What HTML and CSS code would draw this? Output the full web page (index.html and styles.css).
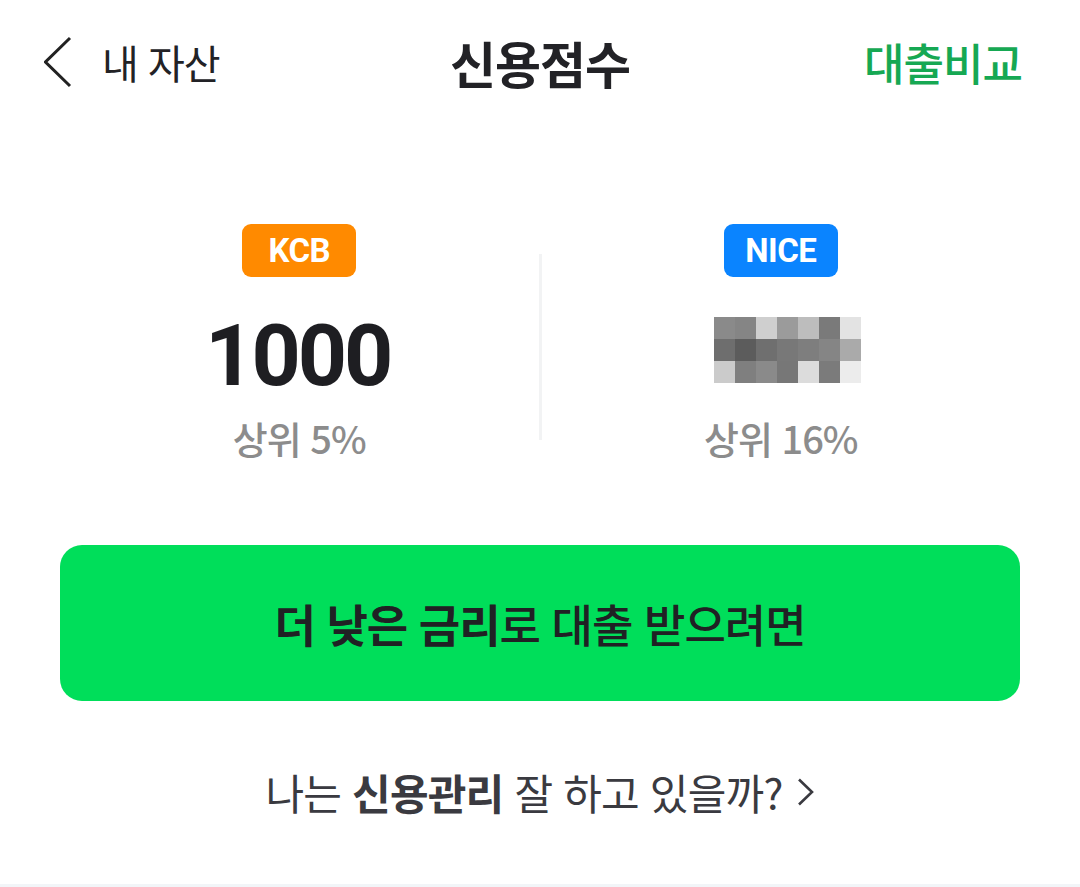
FILE: index.html
```html
<!DOCTYPE html>
<html lang="ko">
  <head>
    <title>신용점수</title>
    <meta charset="UTF-8">
    <meta name="viewport" content="width=device-width, initial-scale=1">
    <link rel="stylesheet" href="styles.css">
  </head>
  <body>
    <header class="topbar">
      <a class="back" href="#">
        <svg width="30" height="52" viewBox="0 0 30 52" aria-hidden="true">
          <polyline points="26,2 1.5,26 26,50" fill="none" stroke="#222" stroke-width="3"/>
        </svg>
        <span>내 자산</span>
      </a>
      <h1 class="title">신용점수</h1>
      <a class="compare" href="#">대출비교</a>
    </header>

    <main>
      <section class="scores">
        <div class="score">
          <span class="badge badge-kcb">KCB</span>
          <div class="value">1000</div>
          <div class="rank">상위 5%</div>
        </div>
        <div class="divider"></div>
        <div class="score">
          <span class="badge badge-nice">NICE</span>
          <div class="mosaic" aria-label="가려진 점수">
            <i style="background:#8a8a8a"></i><i style="background:#858585"></i><i style="background:#cfcfcf"></i><i style="background:#9b9b9b"></i><i style="background:#bdbdbd"></i><i style="background:#7a7a7a"></i><i style="background:#e3e3e3"></i>
            <i style="background:#6e6e6e"></i><i style="background:#5c5c5c"></i><i style="background:#6f6f6f"></i><i style="background:#787878"></i><i style="background:#7e7e7e"></i><i style="background:#858585"></i><i style="background:#aaaaaa"></i>
            <i style="background:#cbcbcb"></i><i style="background:#7f7f7f"></i><i style="background:#8a8a8a"></i><i style="background:#777777"></i><i style="background:#dcdcdc"></i><i style="background:#7b7b7b"></i><i style="background:#ececec"></i>
          </div>
          <div class="rank">상위 16%</div>
        </div>
      </section>

      <button class="cta"><b>더 낮은 금리</b>로 대출 받으려면</button>

      <a class="check" href="#">
        <span>나는 <b>신용관리</b> 잘 하고 있을까?</span>
        <svg width="18" height="28" viewBox="0 0 18 28" aria-hidden="true">
          <polyline points="2,1.5 15,14 2,26.5" fill="none" stroke="#3a3a40" stroke-width="2.6"/>
        </svg>
      </a>
    </main>
    <div class="bottom"></div>
  </body>
</html>
```

FILE: styles.css
```css
:root {
  --font-kr: "Noto Sans CJK KR", "Noto Sans", sans-serif;
  --font-num: Roboto, "Noto Sans CJK KR", sans-serif;
  --color-txt: #222226;
  --color-sub: #8c8c8c;
  --color-green: #00de5a;
  --color-link: #16a853;
}

* {
  box-sizing: border-box;
}

body {
  margin: 0;
  width: 1080px;
  height: 887px;
  overflow: hidden;
  font-family: var(--font-kr);
  color: var(--color-txt);
  background: #fff;
  display: flex;
  flex-direction: column;
}

a {
  color: inherit;
  text-decoration: none;
}

.topbar {
  height: 124px;
  padding: 0 58px 0 44px;
  display: flex;
  align-items: center;
  justify-content: space-between;
  position: relative;
}

.back {
  display: flex;
  align-items: center;
  gap: 28px;
  font-size: 40px;
  letter-spacing: -1px;
}

.title {
  position: absolute;
  left: 0;
  right: 0;
  margin: 0;
  text-align: center;
  font-size: 50px;
  font-weight: 700;
  letter-spacing: -1px;
  pointer-events: none;
}

.compare {
  color: var(--color-link);
  font-size: 44px;
  font-weight: 500;
  letter-spacing: -1px;
}

main {
  flex: 1;
  padding: 0 60px;
  display: flex;
  flex-direction: column;
}

.scores {
  margin-top: 100px;
  display: flex;
  align-items: flex-start;
}

.score {
  flex: 1;
  display: flex;
  flex-direction: column;
  align-items: center;
}

.divider {
  width: 3px;
  height: 186px;
  background: #f2f3f4;
  margin-top: 30px;
}

.badge {
  width: 114px;
  height: 53px;
  border-radius: 9px;
  color: #fff;
  font-family: var(--font-num);
  font-weight: 700;
  font-size: 33px;
  display: flex;
  align-items: center;
  justify-content: center;
  letter-spacing: -0.5px;
}

.badge-kcb {
  background: #ff8a00;
}

.badge-nice {
  background: #0a84ff;
}

.value {
  font-family: var(--font-num);
  font-weight: 700;
  font-size: 86px;
  letter-spacing: -3px;
  line-height: 1;
  margin-top: 36px;
  height: 77px;
  padding-right: 3px;
  color: #1e1e22;
}

.mosaic {
  display: grid;
  grid-template-columns: repeat(7, 21px);
  grid-auto-rows: 22px;
  margin: 40px 0 0 14px;
  height: 73px;
}

.rank {
  margin-top: 20px;
  font-size: 38px;
  font-weight: 500;
  color: var(--color-sub);
  letter-spacing: -1px;
}

.cta {
  margin-top: 80px;
  height: 156px;
  border: 0;
  border-radius: 22px;
  background: var(--color-green);
  color: #202124;
  font-family: var(--font-kr);
  font-size: 45px;
  font-weight: 500;
  letter-spacing: -1px;
  cursor: pointer;
}

.cta b {
  font-weight: 700;
}

.check {
  margin-top: 60px;
  align-self: center;
  display: flex;
  align-items: center;
  gap: 14px;
  font-size: 42px;
  color: #3a3a40;
  letter-spacing: -0.8px;
}

.check b {
  font-weight: 700;
}

.bottom {
  height: 3px;
  background: #f2f5f8;
}
```
